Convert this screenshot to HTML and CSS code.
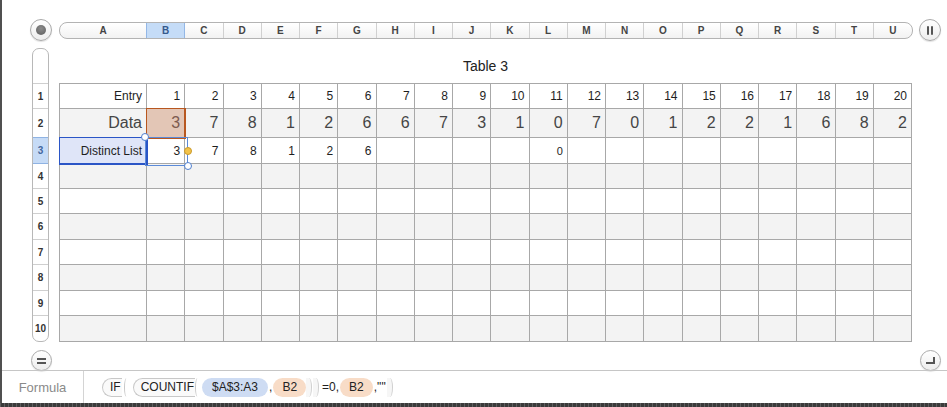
FILE: index.html
```html
<!DOCTYPE html>
<html>
<head>
<meta charset="utf-8">
<link rel="stylesheet" href="styles.css">
</head>
<body>
<div class="window">
  <div class="top">
    <div class="rbtn"><span class="dot"></span></div>
    <div class="colbar">
      <div class="ch">A</div><div class="ch on">B</div><div class="ch">C</div><div class="ch">D</div><div class="ch">E</div><div class="ch">F</div><div class="ch">G</div><div class="ch">H</div><div class="ch">I</div><div class="ch">J</div><div class="ch">K</div><div class="ch">L</div><div class="ch">M</div><div class="ch">N</div><div class="ch">O</div><div class="ch">P</div><div class="ch">Q</div><div class="ch">R</div><div class="ch">S</div><div class="ch">T</div><div class="ch">U</div>
    </div>
    <div class="rbtn pause"><span class="bar"></span><span class="bar"></span></div>
  </div>

  <div class="main">
    <div class="rowhead">
      <div class="rh-top"></div>
      <div class="rh h25">1</div>
      <div class="rh h29">2</div>
      <div class="rh h26 on">3</div>
      <div class="rh h25">4</div>
      <div class="rh h25">5</div>
      <div class="rh h26">6</div>
      <div class="rh h25">7</div>
      <div class="rh h26">8</div>
      <div class="rh h25">9</div>
      <div class="rh h25">10</div>
    </div>

    <div class="tablewrap">
      <div class="title">Table 3</div>
      <div class="grid">
        <div class="row h25">
          <div>Entry</div><div>1</div><div>2</div><div>3</div><div>4</div><div>5</div><div>6</div><div>7</div><div>8</div><div>9</div><div>10</div><div>11</div><div>12</div><div>13</div><div>14</div><div>15</div><div>16</div><div>17</div><div>18</div><div>19</div><div>20</div>
        </div>
        <div class="row h29 alt big">
          <div>Data</div><div class="b2">3</div><div>7</div><div>8</div><div>1</div><div>2</div><div>6</div><div>6</div><div>7</div><div>3</div><div>1</div><div>0</div><div>7</div><div>0</div><div>1</div><div>2</div><div>2</div><div>1</div><div>6</div><div>8</div><div>2</div>
        </div>
        <div class="row h26">
          <div class="a3">Distinct List</div><div>3</div><div>7</div><div>8</div><div>1</div><div>2</div><div>6</div><div></div><div></div><div></div><div></div><div class="small">0</div><div></div><div></div><div></div><div></div><div></div><div></div><div></div><div></div><div></div>
        </div>
        <div class="row h25 alt">
          <div></div><div></div><div></div><div></div><div></div><div></div><div></div><div></div><div></div><div></div><div></div><div></div><div></div><div></div><div></div><div></div><div></div><div></div><div></div><div></div><div></div>
        </div>
        <div class="row h25">
          <div></div><div></div><div></div><div></div><div></div><div></div><div></div><div></div><div></div><div></div><div></div><div></div><div></div><div></div><div></div><div></div><div></div><div></div><div></div><div></div><div></div>
        </div>
        <div class="row h26 alt">
          <div></div><div></div><div></div><div></div><div></div><div></div><div></div><div></div><div></div><div></div><div></div><div></div><div></div><div></div><div></div><div></div><div></div><div></div><div></div><div></div><div></div>
        </div>
        <div class="row h25">
          <div></div><div></div><div></div><div></div><div></div><div></div><div></div><div></div><div></div><div></div><div></div><div></div><div></div><div></div><div></div><div></div><div></div><div></div><div></div><div></div><div></div>
        </div>
        <div class="row h26 alt">
          <div></div><div></div><div></div><div></div><div></div><div></div><div></div><div></div><div></div><div></div><div></div><div></div><div></div><div></div><div></div><div></div><div></div><div></div><div></div><div></div><div></div>
        </div>
        <div class="row h25">
          <div></div><div></div><div></div><div></div><div></div><div></div><div></div><div></div><div></div><div></div><div></div><div></div><div></div><div></div><div></div><div></div><div></div><div></div><div></div><div></div><div></div>
        </div>
        <div class="row h26 alt">
          <div></div><div></div><div></div><div></div><div></div><div></div><div></div><div></div><div></div><div></div><div></div><div></div><div></div><div></div><div></div><div></div><div></div><div></div><div></div><div></div><div></div>
        </div>

        <div class="selection">
          <span class="handle tl"></span>
          <span class="handle mr"></span>
          <span class="handle br"></span>
        </div>
      </div>
    </div>
  </div>

  <div class="bottom">
    <div class="rbtn small-btn"><span class="eq"></span></div>
    <div class="rbtn small-btn"><span class="corner"></span></div>
  </div>

  <div class="formula">
    <div class="flabel">Formula</div>
    <div class="ftokens">
      <span class="fn">IF</span><span class="po wide"></span>
      <span class="fn">COUNTIF</span><span class="po"></span>
      <span class="ref blue">$A$3:A3</span><span class="op">,</span>
      <span class="ref org">B2</span><span class="pc"></span><span class="pc"></span>
      <span class="op eq-op">=0,</span>
      <span class="ref org">B2</span><span class="op">,""</span><span class="pc"></span>
    </div>
  </div>
</div>
<div class="desk"></div>
</body>
</html>
```

FILE: styles.css
```css
* { box-sizing: border-box; margin: 0; padding: 0; }
html, body { width: 947px; height: 407px; overflow: hidden; background: #fff; }
body { font-family: "Liberation Sans", Arial, sans-serif; color: #222; }

.window {
  height: 403px;
  border-left: 2px solid #505050;
  display: flex;
  flex-direction: column;
  background: #fff;
}

/* top: column header bar */
.top { margin-top: 19px; height: 22px; display: flex; align-items: center; padding-left: 28px; }
.rbtn {
  width: 22px; height: 22px; border-radius: 50%;
  border: 1px solid #aaaaaa;
  background: linear-gradient(#ffffff, #ededed);
  box-shadow: 0 1px 1px rgba(0,0,0,.12);
  display: flex; align-items: center; justify-content: center; gap: 2px;
  flex: none;
}
.dot { width: 10px; height: 10px; border-radius: 50%; background: radial-gradient(circle at 50% 35%, #8c8c8c, #5c5c5c); }
.pause { margin-left: 6px; }
.bar { width: 2px; height: 9px; background: #555; border-radius: 1px; }

.colbar {
  margin-left: 7px; width: 854px; height: 17px;
  border: 1px solid #b3b3b3; border-radius: 8px;
  background: linear-gradient(#ffffff, #f2f2f2);
  display: grid; grid-template-columns: 87px repeat(20, 1fr);
  overflow: hidden;
}
.ch {
  border-right: 1px solid #d0d0d0;
  font-size: 10px; font-weight: bold; color: #444;
  display: flex; align-items: center; justify-content: center;
}
.ch:last-child { border-right: none; }
.ch.on { background: #c5dcf7; color: #36598c; border-right-color: #93b7e6; box-shadow: -1px 0 0 #93b7e6; }

/* main area */
.main { margin-top: 7px; display: flex; padding-left: 30px; }
.rowhead {
  width: 17px; height: 294px; flex: none;
  border: 1px solid #b8b8b8; border-radius: 7px;
  display: flex; flex-direction: column; overflow: hidden; background: #fff;
}
.rh-top { height: 35px; flex: none; border-bottom: 1px solid #cfcfcf; }
.rh {
  flex: none; border-bottom: 1px solid #cfcfcf;
  font-size: 10px; font-weight: bold; color: #333;
  display: flex; align-items: center; justify-content: center;
}
.rh:last-child { border-bottom: none; }
.rh.on { background: #c6dbf6; color: #44689e; border-bottom-color: #8fb3e3; box-shadow: 0 -1px 0 #8fb3e3; }
.h25 { height: 25px; }
.h26 { height: 26px; }
.h29 { height: 29px; }

.tablewrap { margin-left: 10px; width: 853px; }
.title { height: 35px; display: flex; align-items: center; justify-content: center; font-size: 14px; color: #222; padding-top: 1px; }

.grid { position: relative; width: 853px; border-left: 1px solid #a8a8a8; border-top: 1px solid #a8a8a8; }
.row { display: grid; grid-template-columns: 87px repeat(20, 1fr); }
.row > div {
  border-right: 1px solid #a8a8a8; border-bottom: 1px solid #a8a8a8;
  display: flex; align-items: center; justify-content: flex-end;
  padding-right: 4px; font-size: 12px; color: #1e1e1e;
}
.alt { background: #f3f3f3; }
.big > div { font-size: 16px; color: #454545; }
.row > div.small { font-size: 11px; }

.row > div.b2 {
  background: #e3c6b6; color: #7d5b50;
  border-right-color: #b8571f; border-bottom-color: #b8571f;
  outline: 1px solid #b8571f; position: relative; z-index: 1;
}
.row > div.a3 {
  background: #dfe5f8;
  border-right-color: #2a55c6; border-bottom-color: #2a55c6;
  outline: 1px solid #2a55c6; position: relative; z-index: 1;
}

/* selection overlay on B3 */
.selection {
  position: absolute; left: 85px; top: 53px; width: 43px; height: 29px;
  border: 1px solid #5b8ad8; z-index: 2;
}
.handle {
  position: absolute; width: 8px; height: 8px; border-radius: 50%;
  background: #fff; border: 1px solid #4f7fcf;
}
.handle.tl { left: -5px; top: -5px; }
.handle.br { right: -5px; bottom: -5px; }
.handle.mr { right: -5px; top: 9px; background: #f3c34a; border-color: #c99a2c; }

/* bottom buttons */
.bottom { margin-top: 8px; height: 20px; display: flex; justify-content: space-between; padding: 0 6px 0 29px; }
.small-btn { width: 21px; height: 21px; }
.eq { width: 9px; height: 6px; border-top: 2px solid #555; border-bottom: 2px solid #555; }
.corner { width: 9px; height: 7px; border-right: 2px solid #555; border-bottom: 2px solid #555; margin-top: -1px; }

/* formula bar */
.formula { border-top: 1px solid #c6c6c6; height: 33px; display: flex; }
.flabel {
  width: 82px; border-right: 1px solid #d4d4d4;
  display: flex; align-items: center; justify-content: center;
  font-size: 13px; color: #8a8a8a; padding-top: 1px;
}
.ftokens { display: flex; align-items: center; padding-left: 18px; font-size: 12px; color: #222; }
.fn {
  height: 19px; display: flex; align-items: center;
  border: 1px solid #c8c8c8; border-right: none; border-radius: 10px 0 0 10px;
  background: #fafafa; padding: 0 1px 0 7px;
}
.po { width: 5px; height: 19px; border-left: 1px solid #c8c8c8; border-radius: 50% 0 0 50%; margin-right: 2px; }
.po.wide { margin-left: 2px; margin-right: 4px; }
.ref { height: 19px; display: flex; align-items: center; border-radius: 10px; }
.blue { background: #cedcf3; padding: 0 10px; }
.org { background: #f8dcc7; padding: 0 9px; }
.op { padding: 0 1px; }
.op.eq-op { padding: 0 1px 0 2px; }
.pc { width: 6px; height: 19px; border-right: 1px solid #cfcfcf; border-radius: 0 50% 50% 0; background: #f6f6f6; margin-right: 1px; }

.desk {
  height: 4px;
  background: repeating-linear-gradient(90deg, #5f5f5f 0 1px, #3b3b3b 1px 4px);
}
```
